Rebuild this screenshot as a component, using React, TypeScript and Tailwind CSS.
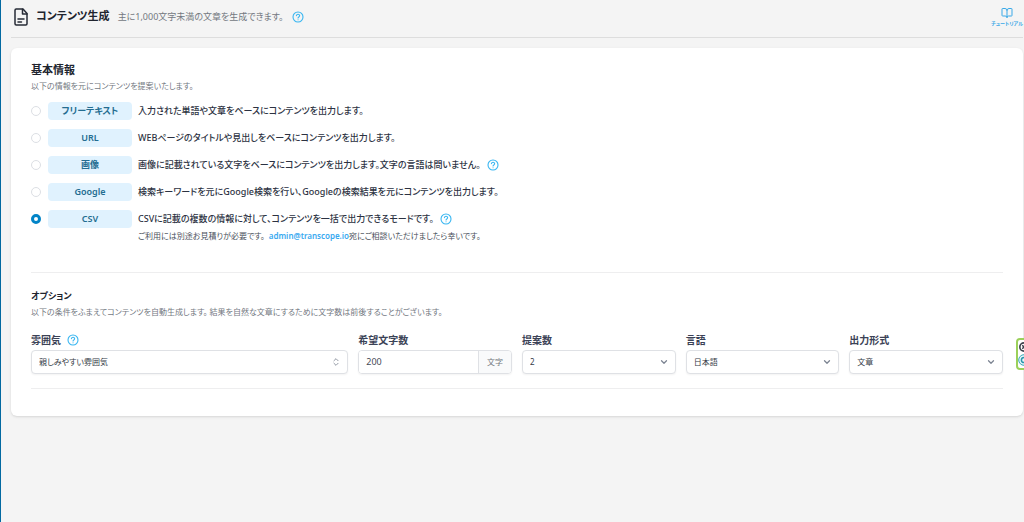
import React, { useId, useState } from "react";
import { BookOpen, ChevronDown, ChevronsUpDown, CircleX } from "lucide-react";

function HelpIcon({ label }: { label: string }) {
  return (
    <button type="button" aria-label={label} className="shrink-0 text-[#38b6f1]">
      <svg viewBox="0 0 24 24" fill="none" stroke="currentColor" strokeWidth="2.2" strokeLinecap="round" strokeLinejoin="round" className="size-3">
        <circle cx="12" cy="12" r="10" />
        <path d="M8.8 9.2a3.3 3.3 0 0 1 6.5.2c0 2.300-3.200 2.700-3.200 4.600M12.100 17.400v.2" />
      </svg>
    </button>
  );
}

function DocumentIcon() {
  return (
    <svg viewBox="0 0 14 18" fill="none" stroke="#262b36" strokeWidth="1.500" strokeLinejoin="round" strokeLinecap="round" className="h-[18px] w-3.5" aria-hidden="true">
      <path d="M1 2.200C1 1.500 1.500 1 2.200 1H9l4 4.500v10.300c0 .7-.5 1.200-1.200 1.200H2.200C1.500 17 1 16.500 1 15.800z" />
      <path d="M8.500 1.200V6H13M4 11h6M4 14h3.500" />
    </svg>
  );
}

type Mode = {
  id: string;
  label: string;
  text: string;
  help?: boolean;
};

const modes: Mode[] = [
  { id: "free", label: "フリーテキスト", text: "入力された単語や文章をベースにコンテンツを出力します。" },
  { id: "url", label: "URL", text: "WEBページのタイトルや見出しをベースにコンテンツを出力します。" },
  { id: "image", label: "画像", text: "画像に記載されている文字をベースにコンテンツを出力します。文字の言語は問いません。", help: true },
  { id: "google", label: "Google", text: "検索キーワードを元にGoogle検索を行い、Googleの検索結果を元にコンテンツを出力します。" },
  { id: "csv", label: "CSV", text: "CSVに記載の複数の情報に対して、コンテンツを一括で出力できるモードです。", help: true },
];

const labelClass = "text-[10px] leading-4 font-semibold text-[#3b4256]";

function SelectField({ label, options, help, stepper, className }: {
  label: string;
  options: string[];
  help?: boolean;
  stepper?: boolean;
  className?: string;
}) {
  const id = useId();
  const Icon = stepper ? ChevronsUpDown : ChevronDown;
  return (
    <div className={className}>
      <div className="mb-0.5 flex items-center gap-1.5">
        <label htmlFor={id} className={labelClass}>{label}</label>
        {help && <HelpIcon label={label + "について"} />}
      </div>
      <div className="grid items-center">
        <select id={id} className="col-start-1 row-start-1 h-6 w-full appearance-none rounded border border-[#dfe1e5] bg-white px-[7px] text-[8px] text-[#343a46] shadow-xs">
          {options.map((o) => <option key={o}>{o}</option>)}
        </select>
        <Icon className="pointer-events-none col-start-1 row-start-1 mr-[7px] size-2.5 justify-self-end text-[#7c8492]" strokeWidth={stepper ? 2 : 3} aria-hidden="true" />
      </div>
    </div>
  );
}

export default function App() {
  const [mode, setMode] = useState("csv");
  return (
    <div className="min-h-screen overflow-x-hidden border-l border-[#0369a1] bg-[#f4f4f4] pr-px pl-2.5 font-['Noto_Sans','Noto_Sans_CJK_JP',sans-serif] [font-feature-settings:'palt']">
      <header className="flex h-[38px] items-center border-b border-[#dddddd] pb-1 pl-[3px]">
        <DocumentIcon />
        <h1 className="ml-2 text-[11px] font-semibold text-[#20242e]">コンテンツ生成</h1>
        <p className="mr-2 ml-2 text-[9px] text-[#73787f]">主に1,000文字未満の文章を生成できます。</p>
        <HelpIcon label="コンテンツ生成について" />
        <a href="#tutorial" className="ml-auto flex flex-col items-center text-[#38a9e8]">
          <BookOpen className="size-3" strokeWidth={2} aria-hidden="true" />
          <span className="text-[5px] leading-2 font-semibold">チュートリアル</span>
        </a>
      </header>

      <main className="mt-2.5 rounded-md bg-white px-5 pt-3.5 pb-[27px] shadow-sm">
        <section>
          <h2 id="basic-heading" className="text-[11px] leading-4 font-semibold text-[#20242e]">基本情報</h2>
          <p className="text-[8px] leading-4 text-[#73787f]">以下の情報を元にコンテンツを提案いたします。</p>
          <div role="radiogroup" aria-labelledby="basic-heading" className="mt-2 flex flex-col gap-[9px]">
            {modes.map((m) => (
              <div key={m.id} className="flex h-[18px] items-center">
                <label className="flex items-center">
                  <input
                    type="radio"
                    name="mode"
                    value={m.id}
                    checked={mode === m.id}
                    onChange={() => setMode(m.id)}
                    className="size-2.5 appearance-none rounded-full border border-[#dcdfe4] bg-white checked:border-[3px] checked:border-[#0284c7]"
                  />
                  <span className="ml-[7px] w-[84px] rounded bg-[#e0f2fe] text-center text-[9px] leading-[18px] font-semibold text-[#246d91]">{m.label}</span>
                  <span className="ml-1.5 text-[9px] leading-[18px] font-medium text-[#2c3242]">{m.text}</span>
                </label>
                {m.help && <span className="ml-1.5 flex"><HelpIcon label={m.label + "について"} /></span>}
              </div>
            ))}
          </div>
          <p className="ml-[107px] text-[8px] leading-4 text-[#4b515c]">
            ご利用には別途お見積りが必要です。
            <a href="mailto:admin@transcope.io" className="ml-1 font-semibold text-[#38a9f0]">admin@transcope.io</a>
            宛にご相談いただけましたら幸いです。
          </p>
        </section>

        <section className="mt-7 border-y border-[#eeeeef] pt-[15px] pb-3.5">
          <h2 className="text-[9px] leading-4 font-semibold text-[#20242e]">オプション</h2>
          <p className="text-[8px] leading-4 text-[#73787f]">以下の条件をふまえてコンテンツを自動生成します。 結果を自然な文章にするために文字数は前後することがございます。</p>
          <div className="mt-3 grid grid-cols-6 gap-2.5">
            <SelectField className="col-span-2" label="雰囲気" options={["親しみやすい雰囲気"]} help stepper />
            <div>
              <label htmlFor="length" className={labelClass + " mb-0.5 block"}>希望文字数</label>
              <div className="flex h-6 overflow-hidden rounded border border-[#dfe1e5] shadow-xs">
                <input id="length" type="text" inputMode="numeric" defaultValue="200" className="min-w-0 flex-1 bg-white px-[7px] text-[9px] text-[#454b57]" />
                <span className="flex items-center border-l border-[#dfe1e5] bg-[#f9fafb] px-2 text-[8px] text-[#73787f]">文字</span>
              </div>
            </div>
            <SelectField label="提案数" options={["2", "1", "3"]} />
            <SelectField label="言語" options={["日本語"]} />
            <SelectField label="出力形式" options={["文章"]} />
          </div>
        </section>
      </main>

      <aside className="fixed top-[338px] -right-2 flex h-8 w-4 flex-col items-center justify-center gap-0.5 rounded border-2 border-[#9bd05a] bg-white">
        <CircleX className="size-2.5 shrink-0 text-[#3d424c]" strokeWidth={4} aria-hidden="true" />
        <svg viewBox="0 0 12 12" fill="none" className="size-3 shrink-0" aria-hidden="true">
          <circle cx="6" cy="6" r="5.300" fill="#e5f7fb" stroke="#39a7b7" />
          <circle cx="6" cy="6" r="2.600" stroke="#2996ac" strokeWidth="1.500" />
        </svg>
      </aside>
    </div>
  );
}
